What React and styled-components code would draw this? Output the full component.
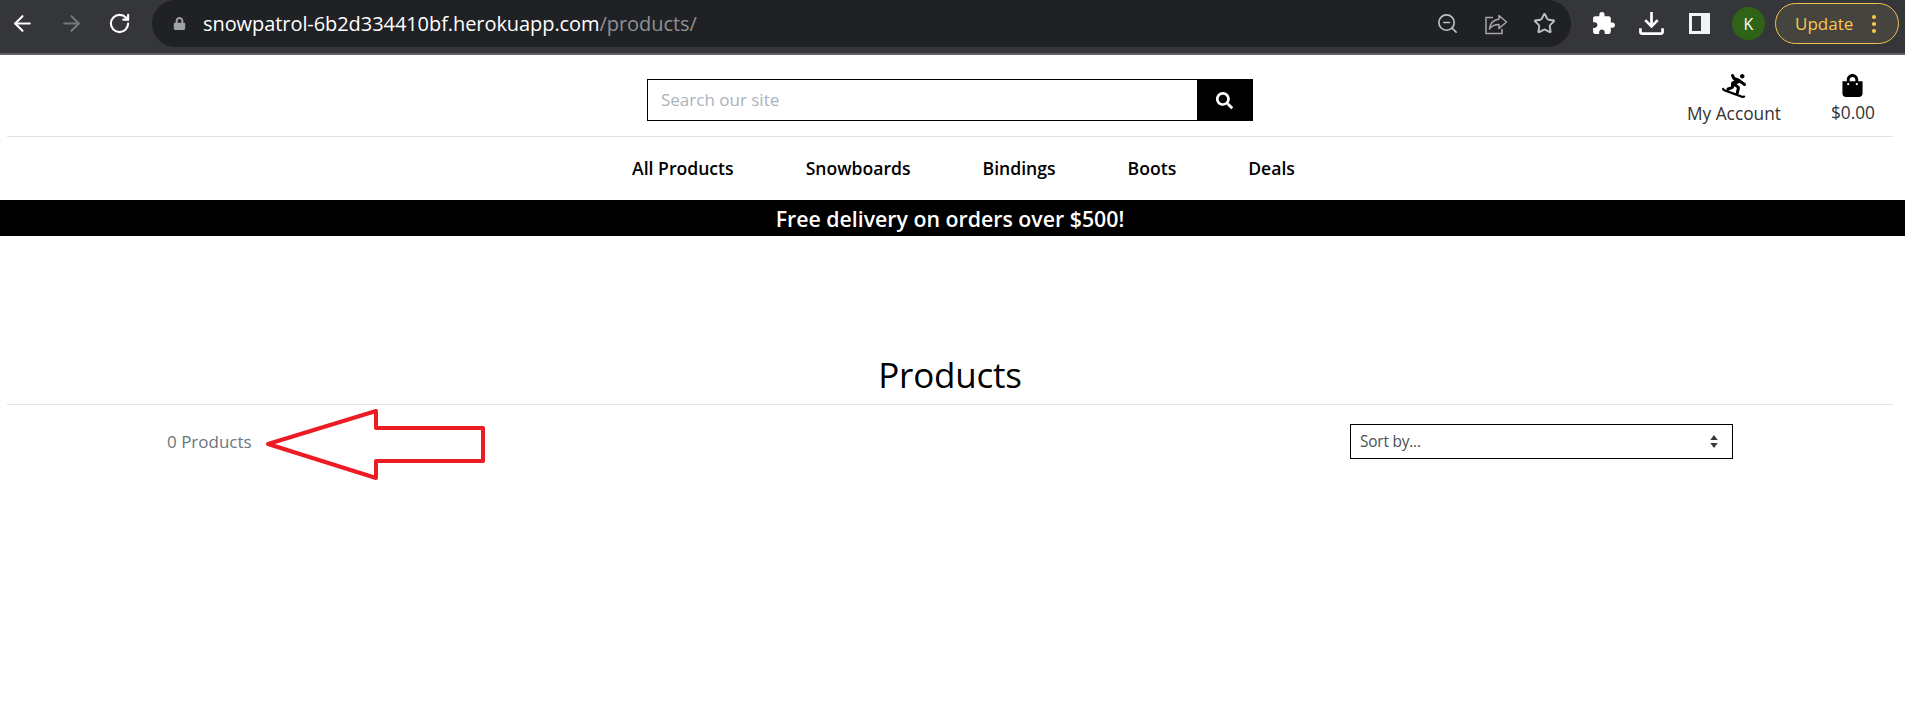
import React from 'react';
import styled, { createGlobalStyle } from 'styled-components';
import { FaSearch, FaShoppingBag, FaSnowboarding, FaLock } from 'react-icons/fa';
import { MdExtension } from 'react-icons/md';
import { ArrowLeft, ArrowRight, RotateCw, ZoomOut, Star } from 'lucide-react';

const GlobalStyle = createGlobalStyle`
  html, body {
    margin: 0;
    padding: 0;
    background: #fff;
    font-family: "Open Sans", "Noto Sans", "Liberation Sans", sans-serif;
  }
  * {
    box-sizing: border-box;
  }
`;

const navItems = ['All Products', 'Snowboards', 'Bindings', 'Boots', 'Deals'];

function App() {
  return (
    <Page>
      <GlobalStyle />
      <BrowserBar>
        <NavIcons>
          <ArrowLeft size={25} color="#fff" strokeWidth={2} />
          <ArrowRight size={25} color="#77787b" strokeWidth={2} />
          <RotateCw size={23} color="#fff" strokeWidth={2.2} />
        </NavIcons>
        <Omnibox>
          <FaLock size={13} color="#a0a1a4" />
          <Url>
            snowpatrol-6b2d334410bf.herokuapp.com<UrlPath>/products/</UrlPath>
          </Url>
          <OmniActions>
            <ZoomOut size={23} color="#bdc1c6" strokeWidth={1.7} />
            <ShareIcon viewBox="0 0 24 24">
              <path d="M15 3.500 22.500 10 15 16.500v-4c-4.500 0-7.500 1.500-9.500 4.500.5-5.500 4-9 9.500-10z" fill="none" stroke="#a4a6aa" strokeWidth="1.5" strokeLinejoin="round" />
              <path d="M9 5.500H2v16h16V17" fill="none" stroke="#a4a6aa" strokeWidth="1.5" />
            </ShareIcon>
            <Star size={23} color="#bdc1c6" strokeWidth={2} />
          </OmniActions>
        </Omnibox>
        <Extensions>
          <MdExtension size={25} color="#fff" />
          <DownloadIcon viewBox="0 0 26 26">
            <path d="M13 1v14M6.500 9.500 13 16l6.500-6.500M1.500 18v3.500a2 2 0 0 0 2 2h19a2 2 0 0 0 2-2V18" fill="none" stroke="#fff" strokeWidth="2.8" />
          </DownloadIcon>
          <SidePanel />
          <Avatar>K</Avatar>
          <UpdateButton>
            Update
            <Dots>
              <i /><i /><i />
            </Dots>
          </UpdateButton>
        </Extensions>
      </BrowserBar>

      <Header>
        <TopRow>
          <SearchBox>
            <SearchInput placeholder="Search our site" />
            <SearchButton><FaSearch size={17} /></SearchButton>
          </SearchBox>
          <AccountLinks>
            <AccountLink>
              <FaSnowboarding size={24} color="#000" />
              My Account
            </AccountLink>
            <AccountLink>
              <FaShoppingBag size={23} color="#000" />
              $0.00
            </AccountLink>
          </AccountLinks>
        </TopRow>
        <MainNav>
          {navItems.map((item) => (
            <NavLink key={item}>{item}</NavLink>
          ))}
        </MainNav>
      </Header>

      <Banner>Free delivery on orders over $500!</Banner>

      <Main>
        <Title>Products</Title>
        <Toolbar>
          <ProductCount>0 Products</ProductCount>
          <SortSelect>
            Sort by...
            <SortCaret viewBox="0 0 8 14">
              <path d="M4 0 8 5.500H0zM4 14 0 8.500h8z" fill="#343a40" />
            </SortCaret>
          </SortSelect>
        </Toolbar>
        <Annotation viewBox="0 0 226 74">
          <path d="M4 35 112 2v17h107v33H112v17z" fill="none" stroke="#ed1c24" strokeWidth="4" strokeLinejoin="round" />
        </Annotation>
      </Main>
    </Page>
  );
}

export default App;

const Page = styled.div`
  width: 1905px;
  height: 722px;
  overflow: hidden;
  background: #fff;
`;

const BrowserBar = styled.div`
  height: 55px;
  display: flex;
  background: #35363a;
  border-bottom: 2px solid #5f6064;
`;

const NavIcons = styled.div`
  width: 152px;
  height: 47px;
  padding: 0 0 0 10px;
  display: flex;
  align-items: center;
  gap: 24px;
`;

const Omnibox = styled.div`
  width: 1419px;
  height: 47px;
  display: flex;
  align-items: center;
  padding: 0 15px 0 21px;
  background: #202124;
  border-radius: 24px;
`;

const Url = styled.div`
  margin-left: 17px;
  font-size: 20px;
  letter-spacing: -0.07px;
  color: #fff;
  white-space: nowrap;
`;

const UrlPath = styled.span`
  color: #8f9195;
`;

const OmniActions = styled.div`
  margin-left: auto;
  display: flex;
  align-items: center;
  gap: 25px;
`;

const ShareIcon = styled.svg`
  width: 24px;
  height: 24px;
`;

const Extensions = styled.div`
  flex: 1;
  height: 47px;
  display: flex;
  align-items: center;
  padding-left: 20px;
`;

const DownloadIcon = styled.svg`
  width: 25px;
  height: 25px;
  margin-left: 23px;
`;

const SidePanel = styled.div`
  width: 21px;
  height: 21px;
  margin-left: 25px;
  background: #35363a;
  border: 3px solid #f1f3f4;
  border-right-width: 9px;
`;

const Avatar = styled.div`
  width: 33px;
  height: 33px;
  margin-left: 22px;
  display: flex;
  align-items: center;
  justify-content: center;
  border-radius: 50%;
  background: #2f6317;
  color: #fff;
  font-size: 16px;
`;

const UpdateButton = styled.div`
  width: 124px;
  height: 41px;
  margin-left: 10px;
  display: flex;
  align-items: center;
  padding-left: 19px;
  border: 1.5px solid #f2c14e;
  border-radius: 21px;
  background: #45443f;
  color: #fdc94b;
  font-size: 17px;
`;

const Dots = styled.span`
  margin-left: 19px;
  display: flex;
  flex-direction: column;
  gap: 3px;

  i {
    display: block;
    width: 4px;
    height: 4px;
    border-radius: 50%;
    background: #fdc94b;
  }
`;

const Header = styled.header`
  height: 145px;
  padding: 0 12px 0 7px;
`;

const TopRow = styled.div`
  position: relative;
  height: 82px;
  display: flex;
  justify-content: center;
  padding: 24px 0 0 0;
  border-bottom: 1px solid #e3e3e3;
`;

const SearchBox = styled.div`
  width: 606px;
  height: 42px;
  display: flex;
  border: 1px solid #000;
`;

const SearchInput = styled.input`
  flex: 1;
  min-width: 0;
  padding: 0 13px 1px;
  border: 0;
  outline: 0;
  font-family: "Open Sans", sans-serif;
  font-size: 17px;

  &::placeholder {
    color: #aab2bd;
    opacity: 1;
  }
`;

const SearchButton = styled.div`
  width: 55px;
  display: flex;
  align-items: center;
  justify-content: center;
  background: #000;
  color: #fff;
`;

const AccountLinks = styled.div`
  position: absolute;
  top: 19px;
  right: 18px;
  display: flex;
  gap: 50px;
`;

const AccountLink = styled.div`
  display: flex;
  flex-direction: column;
  align-items: center;
  gap: 4px;
  font-size: 17.3px;
  color: #333;
`;

const MainNav = styled.nav`
  height: 62px;
  padding-left: 27px;
  display: flex;
  align-items: center;
  justify-content: center;
  gap: 72px;
`;

const NavLink = styled.a`
  font-size: 17.6px;
  font-weight: 600;
  color: #000;
`;

const Banner = styled.div`
  height: 36px;
  padding-right: 5px;
  display: flex;
  align-items: center;
  justify-content: center;
  background: #000;
  color: #fff;
  font-size: 21.3px;
  font-weight: 600;
`;

const Main = styled.main`
  position: relative;
  padding: 0 12px 0 7px;
`;

const Title = styled.h1`
  height: 169px;
  margin: 0;
  padding: 116px 0 0;
  border-bottom: 1px solid #e3e3e3;
  text-align: center;
  font-size: 35px;
  font-weight: 400;
  line-height: 46px;
  letter-spacing: -0.2px;
  color: #000;
`;

const Toolbar = styled.div`
  display: flex;
  align-items: center;
  justify-content: space-between;
  padding: 19px 160px 0 160px;
`;

const ProductCount = styled.div`
  font-size: 17px;
  line-height: 22px;
  color: #6c757d;
`;

const SortSelect = styled.div`
  width: 383px;
  height: 35px;
  display: flex;
  align-items: center;
  justify-content: space-between;
  padding: 0 14px 1px 9px;
  border: 1px solid #000;
  font-size: 15.4px;
  letter-spacing: -0.2px;
  color: #495057;
`;

const SortCaret = styled.svg`
  width: 8px;
  height: 13px;
`;

const Annotation = styled.svg`
  position: absolute;
  left: 264px;
  top: 173px;
  width: 226px;
  height: 74px;
`;
